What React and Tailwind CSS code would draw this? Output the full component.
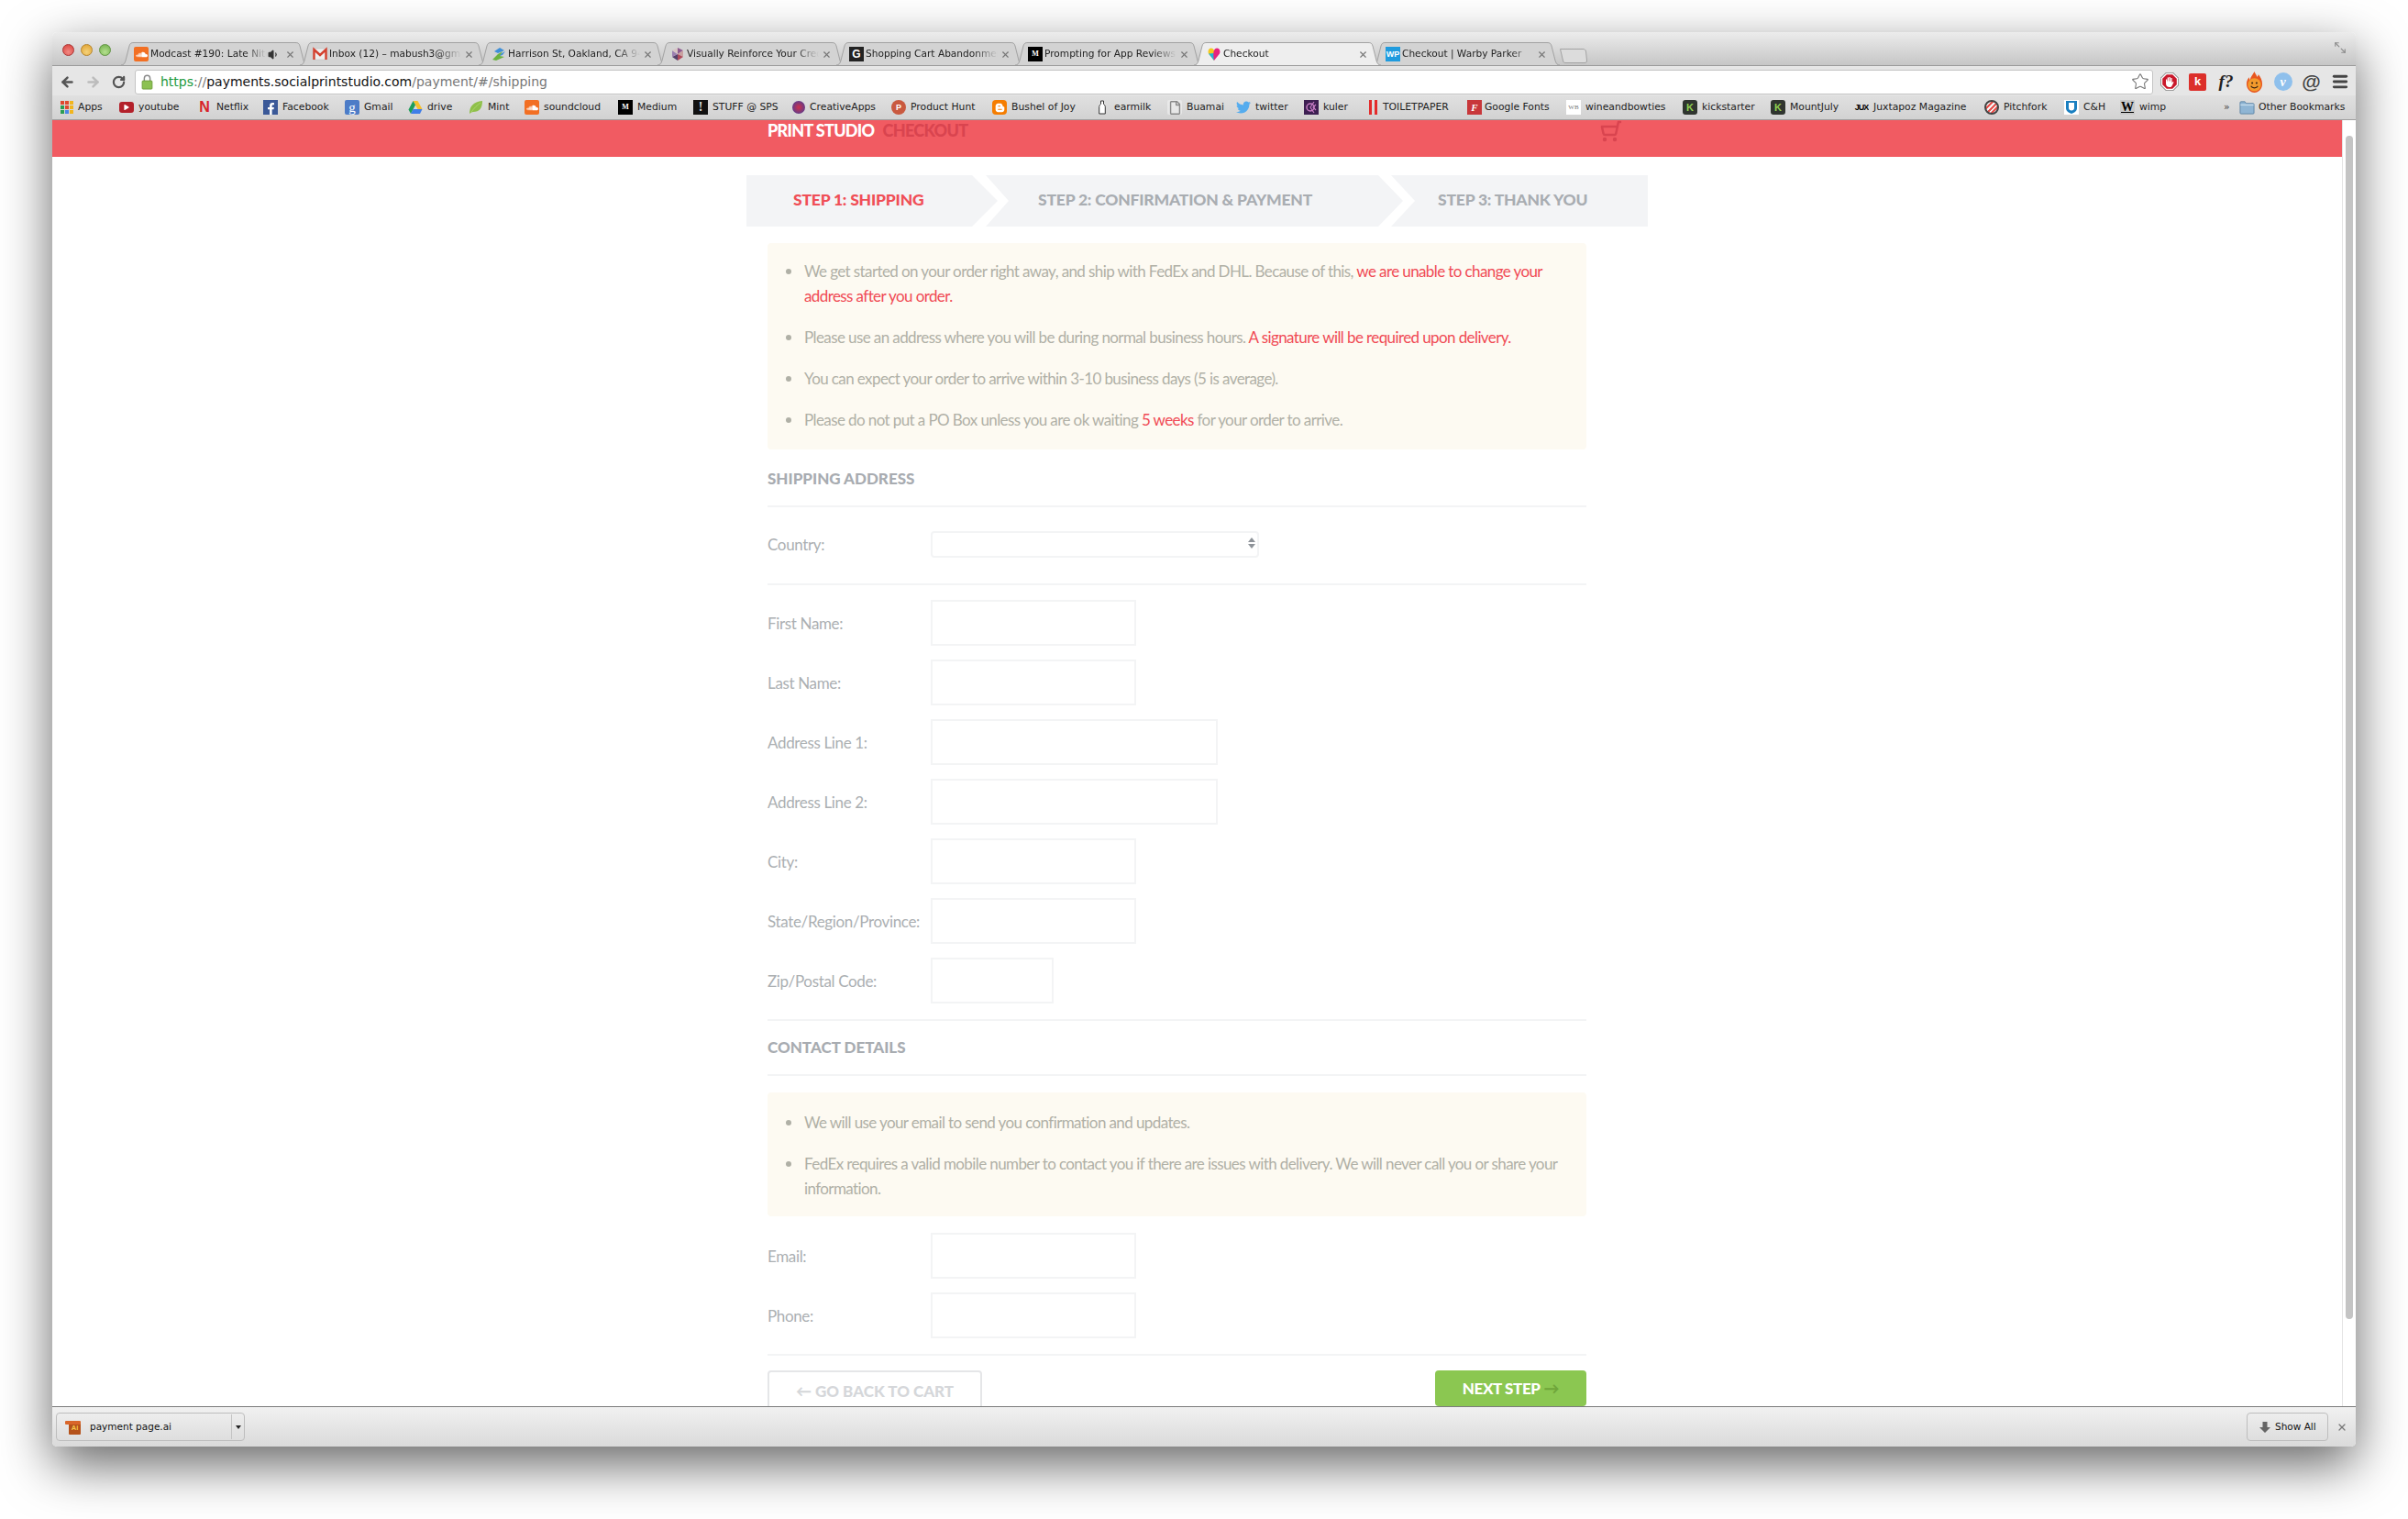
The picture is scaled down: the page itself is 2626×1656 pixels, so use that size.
import React from 'react';
import { ShoppingCart, Star, Menu, ArrowLeft, ArrowRight, RotateCw, X, Volume1, Maximize2 } from 'lucide-react';
import { FaSoundcloud, FaFacebookF, FaTwitter, FaBloggerB, FaPlay, FaRegFile } from 'react-icons/fa';

const Tile = ({ className, children }) => (
  <span className={'flex size-4 shrink-0 items-center justify-center overflow-hidden rounded-[2px] font-bold leading-none ' + className}>{children}</span>
);

const Drive = () => (
  <svg viewBox="0 0 16 16" className="size-4 shrink-0">
    <polygon points="5.5,1 10.500,1 15.500,10 10.500,10" fill="#f6c02c" />
    <polygon points="5.500,1 8,5.500 3,15 0.500,10.500" fill="#1e9e5a" />
    <polygon points="5.500,10 15.500,10 13,15 3,15" fill="#3f7ee8" />
  </svg>
);

const Apps = () => (
  <span className="grid size-[14px] shrink-0 grid-cols-3 gap-[1px]">
    <i className="bg-[#e0492f]" /><i className="bg-[#e0492f]" /><i className="bg-[#f2b51d]" />
    <i className="bg-[#2c9d52]" /><i className="bg-[#e0492f]" /><i className="bg-[#f2b51d]" />
    <i className="bg-[#2c9d52]" /><i className="bg-[#4a86e8]" /><i className="bg-[#f2b51d]" />
  </span>
);

const Bottle = () => (
  <svg viewBox="0 0 16 16" className="size-4 shrink-0" fill="#fff" stroke="#333" strokeWidth="1">
    <path d="M6.500 1h3v3.500c1.200 1 1.800 1.800 1.800 3V15H4.700V7.500c0-1.200.6-2 1.800-3z" />
  </svg>
);

const Gmail = () => (
  <svg viewBox="0 0 16 16" className="size-4 shrink-0">
    <rect x="1" y="2" width="14" height="12" fill="#eee" stroke="#bbb" strokeWidth="0.5" />
    <path d="M1.500 14V3l6.500 6 6.500-6v11" fill="none" stroke="#d4402f" strokeWidth="2.400" />
  </svg>
);

const Zillow = () => (
  <svg viewBox="0 0 16 16" className="size-4 shrink-0">
    <polygon points="9,1 14,4 7,7 3,5" fill="#3f8fd8" />
    <polygon points="15,5 12,9 6,11 11,7" fill="#3f8fd8" />
    <polygon points="12,5 7,8 1,14 5,15 14,11 9,10" fill="#6cb33f" />
  </svg>
);

const Pie = () => (
  <svg viewBox="0 0 16 16" className="size-4 shrink-0">
    <polygon points="8,1 14,4 8,8" fill="#8d5a8f" />
    <polygon points="14,4 14,11 8,8" fill="#c9a0a0" />
    <polygon points="14,11 8,15 8,8" fill="#b04a5a" />
    <polygon points="8,15 2,11 8,8" fill="#55406b" />
    <polygon points="2,11 2,4 8,8" fill="#9b7fb0" />
    <polygon points="2,4 8,1 8,8" fill="#d7c4c4" />
  </svg>
);

const Heart = () => (
  <svg viewBox="0 0 16 16" className="size-4 shrink-0">
    <path d="M8 15 2 7.500C.8 5 2 1.500 4.800 1.500 6.500 1.500 7.500 2.500 8 4z" fill="#f5c91f" />
    <path d="M8 15 2 7.500 8 7z" fill="#1fb5d6" />
    <path d="M8 15 14 7.500C15.200 5 14 1.500 11.200 1.500 9.500 1.500 8.500 2.500 8 4 7 6 7 10 8 15z" fill="#e6237e" />
  </svg>
);

const Leaf = () => (
  <svg viewBox="0 0 16 16" className="size-4 shrink-0">
    <path d="M1 15C1 7 5 2 15 1c0 8-3 12-10 12-1.500 0-2.500.8-4 2z" fill="#8fc04a" />
    <path d="M3 13C6 9 9 6 13 3" stroke="#b6dc7a" strokeWidth=".7" fill="none" />
  </svg>
);

const Padlock = () => (
  <svg viewBox="0 0 14 20" className="h-[18px] w-[13px] shrink-0">
    <path d="M3.500 10V6a3.500 3.500 0 0 1 7 0v4" fill="none" stroke="#8a8a8a" strokeWidth="1.600" />
    <rect x="1" y="9" width="12" height="10" rx="1" fill="#8cc152" stroke="#6d9c3a" />
  </svg>
);

const Kuler = () => (
  <svg viewBox="0 0 16 16" className="size-4 shrink-0">
    <rect width="16" height="16" fill="#3d1f52" />
    <circle cx="7" cy="8" r="4" fill="none" stroke="#c77dc4" strokeWidth="1.500" />
    <path d="M11 2 7 8l4 6M13 5l-3 3 3 3" fill="none" stroke="#c77dc4" strokeWidth="1.200" />
  </svg>
);

const BlueFolder = () => (
  <svg viewBox="0 0 18 16" className="h-4 w-[17px] shrink-0">
    <path d="M1 14.500V2.500C1 1.800 1.500 1.500 2 1.500h4.500L8 3.500h8c.6 0 1 .4 1 1v10c0 .6-.4 1-1 1H2c-.6 0-1-.4-1-1z" fill="#8fb5d4" stroke="#5f86a6" />
    <rect x="1.500" y="4.500" width="15" height="1.500" fill="#c5dcec" />
  </svg>
);

const Flame = () => (
  <svg viewBox="0 0 20 24" className="h-[23px] w-[19px]">
    <path d="M10 0c1 3 2.500 3.500 3 6 1-.8 1.500-2 1.500-3 2.500 3 4.500 6.500 4.500 11 0 5.500-4 10-9 10s-9-4.500-9-10c0-3 1.200-5.500 3-7.500 0 1.200.3 2.200 1 3C5.500 6 8 4 10 0z" fill="#e8561f" />
    <circle cx="10" cy="15" r="7.500" fill="#f39a2c" />
    <circle cx="7.500" cy="13" r="1.100" fill="#3b2412" />
    <circle cx="12.500" cy="13" r="1.100" fill="#3b2412" />
    <path d="M6 16.500c1.500 3 6.500 3 8 0" fill="none" stroke="#3b2412" strokeWidth="1.200" />
  </svg>
);

const StopSign = () => (
  <svg viewBox="0 0 20 20" className="size-5">
    <polygon points="6,0 14,0 20,6 20,14 14,20 6,20 0,14 0,6" fill="#7d7d7d" />
    <polygon points="6.300,.8 13.700,.8 19.200,6.300 19.200,13.700 13.700,19.200 6.300,19.200 .8,13.700 .8,6.300" fill="#fff" />
    <polygon points="6.800,2.200 13.200,2.200 17.800,6.800 17.800,13.200 13.200,17.800 6.800,17.800 2.200,13.200 2.200,6.800" fill="#c9182b" />
    <path d="M6 10V7.500h1.200V9.500h.5V5.500h1.300v4h.5V5h1.300v4.500h.5V6h1.300v5.500l1-1.500 1 .5-2 4c-.5 1-1.300 1.500-2.600 1.500H10c-2.500 0-4-1.500-4-4z" fill="#fff" />
  </svg>
);

const AiIcon = () => (
  <span className="relative flex h-4 w-[17px] items-end justify-end">
    <span className="absolute left-0 top-[1px] h-[4px] w-[17px] rounded-[1px] bg-[#d9662a]" />
    <span className="flex h-[14px] w-[13px] items-center justify-center rounded-[1px] bg-[#b5521a] text-[7.5px] font-bold text-[#f8c94a] [font-family:'Liberation_Sans',sans-serif]">Ai</span>
  </span>
);

const Soundcloud = () => <Tile className="bg-[#f26f23] text-[13px] text-white"><FaSoundcloud /></Tile>;
const MediumIcon = () => <Tile className="rounded-none bg-black text-[8px] text-white [font-family:'Liberation_Serif',serif]">M</Tile>;
const Kick = () => <Tile className="rounded-[3px] bg-[#30352f] text-[11px] text-[#8fd14f] [font-family:'Liberation_Sans',sans-serif]">K</Tile>;

const tabs = [
  { title: 'Modcast #190: Late Nite', icon: <Soundcloud />, sound: true },
  { title: 'Inbox (12) – mabush3@gmail.com', icon: <Gmail /> },
  { title: 'Harrison St, Oakland, CA 94612', icon: <Zillow /> },
  { title: 'Visually Reinforce Your Credibility', icon: <Pie /> },
  { title: 'Shopping Cart Abandonment', icon: <Tile className="rounded-none bg-[#222] text-[12px] text-white [font-family:'Liberation_Sans',sans-serif]">G</Tile> },
  { title: 'Prompting for App Reviews', icon: <MediumIcon /> },
  { title: 'Checkout', icon: <Heart />, active: true },
  { title: 'Checkout | Warby Parker', icon: <Tile className="rounded-none bg-[#1f9bde] text-[9px] text-white [font-family:'Liberation_Sans',sans-serif]">WP</Tile> },
];

const bookmarks = [
  { w: 'w-[64px]', name: 'Apps', icon: <Apps /> },
  { w: 'w-[85px]', name: 'youtube', icon: <span className="flex h-[12px] w-4 shrink-0 items-center justify-center rounded-[3px] bg-[#b3202a] text-[6px] text-white"><FaPlay /></span> },
  { w: 'w-[72px]', name: 'Netflix', icon: <Tile className="text-[16px] text-[#d8232a] [font-family:'Liberation_Sans',sans-serif]">N</Tile> },
  { w: 'w-[89px]', name: 'Facebook', icon: <Tile className="items-end rounded-none bg-[#3b5998] text-[13px] text-white"><FaFacebookF /></Tile> },
  { w: 'w-[69px]', name: 'Gmail', icon: <Tile className="bg-[#4d7cc7] text-[15px] font-normal text-white [font-family:'Liberation_Serif',serif]">g</Tile> },
  { w: 'w-[66px]', name: 'drive', icon: <Drive /> },
  { w: 'w-[61px]', name: 'Mint', icon: <Leaf /> },
  { w: 'w-[102px]', name: 'soundcloud', icon: <Soundcloud /> },
  { w: 'w-[82px]', name: 'Medium', icon: <MediumIcon /> },
  { w: 'w-[108px]', name: 'STUFF @ SPS', icon: <Tile className="rounded-none bg-[#111] text-[14px] text-[#ddd] [font-family:'Liberation_Serif',serif]">!</Tile> },
  { w: 'w-[108px]', name: 'CreativeApps', icon: <span className="size-[14px] shrink-0 rounded-full bg-[radial-gradient(circle,#d0304a,#3a3fa0)]" /> },
  { w: 'w-[110px]', name: 'Product Hunt', icon: <Tile className="rounded-full bg-[#c9593f] text-[9px] text-white [font-family:'Liberation_Sans',sans-serif]">P</Tile> },
  { w: 'w-[112px]', name: 'Bushel of Joy', icon: <Tile className="rounded-[4px] bg-[#f57d00] text-[11px] text-white"><FaBloggerB /></Tile> },
  { w: 'w-[79px]', name: 'earmilk', icon: <Bottle /> },
  { w: 'w-[75px]', name: 'Buamai', icon: <Tile className="bg-[#f2f2f2]/60 text-[15px] text-[#8a8a8a]"><FaRegFile /></Tile> },
  { w: 'w-[74px]', name: 'twitter', icon: <Tile className="text-[16px] text-[#55acee]"><FaTwitter /></Tile> },
  { w: 'w-[69px]', name: 'kuler', icon: <Kuler /> },
  { w: 'w-[109px]', name: 'TOILETPAPER', icon: <span className="flex h-4 w-3 shrink-0 justify-center gap-[3px]"><i className="w-[3px] bg-[#e32b2b]" /><i className="w-[3px] bg-[#e32b2b]" /></span> },
  { w: 'w-[108px]', name: 'Google Fonts', icon: <Tile className="rounded-none bg-[#c8373a] text-[11px] italic text-white [font-family:'Liberation_Serif',serif]">F</Tile>, gap: 'ml-[3px]' },
  { w: 'w-[127px]', name: 'wineandbowties', icon: <Tile className="rounded-none bg-white text-[7px] font-normal text-[#777] [font-family:'Liberation_Serif',serif]">WB</Tile> },
  { w: 'w-[96px]', name: 'kickstarter', icon: <Kick /> },
  { w: 'w-[91px]', name: 'MountJuly', icon: <Kick /> },
  { w: 'w-[142px]', name: 'Juxtapoz Magazine', icon: <Tile className="text-[9px] tracking-[-1px] text-black [font-family:'Liberation_Sans',sans-serif]">JUX</Tile> },
  { w: 'w-[87px]', name: 'Pitchfork', icon: <span className="size-4 shrink-0 rounded-full border-2 border-[#444] bg-[repeating-linear-gradient(135deg,#e8534f_0_2px,#f5f5f5_2px_4px)]" /> },
  { w: 'w-[61px]', name: 'C&H', icon: (
    <svg viewBox="0 0 16 16" className="size-4 shrink-0"><rect width="16" height="16" fill="#fff" /><path d="M2 1h12v8c0 3-3 5-6 6-3-1-6-3-6-6z" fill="#1a7fc0" /><path d="M5 3v6c0 1.500 1.300 2.500 3 2.500s3-1 3-2.500V3z" fill="#fff" /></svg>
  ) },
  { w: 'w-[113px]', name: 'wimp', icon: <Tile className="rounded-none bg-[#c9c9c9] text-[14px] text-black underline [font-family:'Liberation_Serif',serif]">W</Tile> },
];

const extensions = [
  <StopSign key="stop" />,
  <span key="k" className="flex size-[19px] items-center justify-center rounded-[2px] bg-[#dc2f2a] text-[13px] font-bold text-white [font-family:'Liberation_Sans',sans-serif]">k</span>,
  <span key="f" className="text-[19px] font-bold italic text-[#222] [font-family:'Liberation_Serif',serif]">f?</span>,
  <Flame key="fire" />,
  <span key="v" className="flex size-5 items-center justify-center rounded-full bg-[#8fc0ec] text-[14px] font-bold italic text-white [font-family:'Liberation_Serif',serif]">v</span>,
  <span key="at" className="text-[21px] font-bold text-[#444] [font-family:'Liberation_Sans',sans-serif]">@</span>,
  <Menu key="menu" size={20} strokeWidth={3.500} className="text-[#444]" />,
];

const labelClass = 'w-[178px] shrink-0 text-[17px] leading-[27px] text-[#abafb2] tracking-[-0.35px]';

function Field({ label, width, last }) {
  return (
    <div className={'flex h-[50px] items-center ' + (last ? '' : 'mb-[15px]')}>
      <label className={labelClass}>{label}</label>
      <input className={'h-full border-2 border-[#f3f4f5] bg-white ' + width} />
    </div>
  );
}

function SectionHead({ title, className }) {
  return (
    <h2 className={'border-b-2 border-[#f3f4f5] text-[17px] font-black leading-[27px] tracking-[0px] text-[#a8acb1] ' + className}>{title}</h2>
  );
}

function Notes({ items, className }) {
  return (
    <ul className={'rounded-[4px] bg-[#fdfaf2] pl-[40px] pr-[20px] ' + className}>
      {items.map((item, i) => (
        <li key={i} className="relative mb-[18px] text-[17px] leading-[27px] tracking-[-0.6px] text-[#b0b0a6] last:mb-0">
          <span className="absolute -left-[20px] top-[11px] size-[6px] rounded-full bg-[#b0b0a6]" />
          {item}
        </li>
      ))}
    </ul>
  );
}

const Red = ({ children }) => <span className="text-[#f04a55]">{children}</span>;

export default function App() {
  return (
    <div className="h-[1656px] overflow-hidden bg-white pl-[57px] pt-[35px] [font-family:'DejaVu_Sans',sans-serif]">
      <div className="flex h-[1542px] w-[2512px] flex-col overflow-hidden rounded-[5px] bg-white shadow-[0_20px_55px_rgba(0,0,0,0.6)]">
        {/* tab strip */}
        <div className="relative flex h-[36px] shrink-0 items-end bg-gradient-to-b from-[#ececec] to-[#c6c6c6] pl-[75px]">
          <div className="absolute left-[11px] top-[13px] flex gap-[7px]">
            <span className="size-[13px] rounded-full border border-[#a33] bg-[radial-gradient(circle_at_50%_70%,#f28a84,#d8403a)]" />
            <span className="size-[13px] rounded-full border border-[#b5842a] bg-[radial-gradient(circle_at_50%_70%,#f5d27a,#dfa02f)]" />
            <span className="size-[13px] rounded-full border border-[#5f9440] bg-[radial-gradient(circle_at_50%_70%,#b5e08f,#6fae4a)]" />
          </div>
          {tabs.map((tab) => (
            <div key={tab.title} className={'relative -mr-[9px] flex h-[25px] w-[204px] shrink-0 items-center pl-[14px] text-[10.6px] text-[#222] ' + (tab.active ? 'z-10' : '')}>
              <svg viewBox="0 0 204 25" preserveAspectRatio="none" className="absolute inset-0 size-full">
                <path d="M0 25 C3 25 4 23 5 20 L9 4 C10 1 11 .5 14 .5 L190 .5 C193 .5 194 1 195 4 L199 20 C200 23 201 25 204 25" fill={tab.active ? '#eeeeee' : '#d3d3d3'} stroke="#a2a2a2" />
              </svg>
              <span className="relative flex w-full items-center pt-[1px]">
                {tab.icon}
                <span className={'ml-[2px] overflow-hidden whitespace-nowrap [mask-image:linear-gradient(to_right,#000_82%,transparent)] ' + (tab.sound ? 'w-[127px]' : 'w-[144px]')}>{tab.title}</span>
                {tab.sound && <Volume1 size={13} fill="currentColor" className="ml-[1px] text-[#333]" />}
                <X size={11} strokeWidth={2.500} className="absolute left-[165px] text-[#777]" />
              </span>
            </div>
          ))}
          <svg viewBox="0 0 30 16" className="mb-[2px] ml-[9px] h-[16px] w-[30px]">
            <path d="M.5 .5H25C27 .5 28 1 28.500 3L29.500 13C29.500 15 28.500 15.500 27 15.500H6C4.500 15.500 4 15 3.500 13z" fill="#dcdcdc" stroke="#a2a2a2" />
          </svg>
          <Maximize2 size={14} className="absolute right-[10px] top-[10px] scale-x-[-1] text-[#8c8c8c]" />
        </div>

        {/* toolbar */}
        <div className="flex h-[33px] shrink-0 items-center border-t border-[#9b9b9b] bg-[#e6e6e6] pl-[8px] pt-[2px]">
          <ArrowLeft size={17} strokeWidth={3.500} className="text-[#555]" />
          <ArrowRight size={17} strokeWidth={3.500} className="ml-[11px] text-[#bcbcbc]" />
          <RotateCw size={15} strokeWidth={3.500} className="ml-[12px] text-[#555]" />
          <div className="ml-[10px] flex h-[27px] w-[2201px] items-center rounded-[3px] border border-[#c4c4c4] bg-white pl-[6px] text-[14px]">
            <Padlock />
            <span className="ml-[8px] whitespace-nowrap text-[#777]"><span className="text-[#1d9a3e]">https</span>://<span className="text-[#111]">payments.socialprintstudio.com</span>/payment/#/shipping</span>
            <Star size={20} strokeWidth={1.300} className="ml-auto mr-[3px] text-[#777]" />
          </div>
          <div className="ml-[2px] flex">
            {extensions.map((ext, i) => (
              <span key={i} className="flex h-[27px] w-[31px] items-center justify-center">{ext}</span>
            ))}
          </div>
        </div>

        {/* bookmarks */}
        <div className="flex h-[27px] shrink-0 items-center border-b border-[#9e9e9e] bg-gradient-to-b from-[#e0e0e0] to-[#d2d2d2] pl-[9px] text-[10.800px] text-[#222]">
          {bookmarks.map((b) => (
            <span key={b.name} className={'flex shrink-0 items-center whitespace-nowrap ' + b.w}>
              {b.icon}
              <span className={b.gap || 'ml-[5px]'}>{b.name}</span>
            </span>
          ))}
          <span className="w-[17px] shrink-0 text-[#444]">»</span>
          <BlueFolder />
          <span className="ml-[4px] whitespace-nowrap">Other Bookmarks</span>
        </div>

        {/* page */}
        <div className="flex min-h-0 flex-1">
          <main className="min-w-0 flex-1 overflow-hidden [font-family:Lato,sans-serif]">
            <header className="flex h-[40px] justify-center bg-[#f15b62]">
              <div className="flex h-[23px] w-[983px] items-center pl-[23px] text-[18px] font-black tracking-[-0.7px]">
                <span className="text-white">PRINT STUDIO</span>
                <span className="ml-[9px] text-[#d9444f]">CHECKOUT</span>
                <ShoppingCart size={24} strokeWidth={2.500} className="ml-[690px] scale-x-[-1] text-[#d9444f]" />
              </div>
            </header>

            <div className="mx-auto w-[983px] pt-[20px]">
              <div className="flex h-[56px] text-[17.500px] font-black tracking-[-0.2px] text-[#a9adb2]">
                <div className="flex w-[274px] items-center bg-[#f3f4f6] pb-[2px] pl-[51px] text-[#f04f57] [clip-path:polygon(0_0,246px_0,100%_50%,246px_100%,0_100%)]">STEP 1: SHIPPING</div>
                <div className="-ml-[13px] flex w-[455px] items-center bg-[#f3f4f6] pb-[2px] pl-[57px] [clip-path:polygon(0_0,428px_0,100%_50%,428px_100%,0_100%,25px_50%)]">STEP 2: CONFIRMATION &amp; PAYMENT</div>
                <div className="-ml-[13px] flex w-[280px] items-center bg-[#f3f4f6] pb-[2px] pl-[51px] [clip-path:polygon(0_0,100%_0,100%_100%,0_100%,26px_50%)]">STEP 3: THANK YOU</div>
              </div>

              <form className="ml-[23px] w-[893px]">
                <Notes
                  className="mt-[18px] pb-[19px] pt-[17px]"
                  items={[
                    <>We get started on your order right away, and ship with FedEx and DHL. Because of this, <Red>we are unable to change your address after you order.</Red></>,
                    <>Please use an address where you will be during normal business hours. <Red>A signature will be required upon delivery.</Red></>,
                    'You can expect your order to arrive within 3-10 business days (5 is average).',
                    <>Please do not put a PO Box unless you are ok waiting <Red>5 weeks</Red> for your order to arrive.</>,
                  ]}
                />

                <SectionHead title="SHIPPING ADDRESS" className="pb-[16px] pt-[18px]" />

                <div className="mt-[26px] flex items-center border-b-2 border-[#f3f4f5] pb-[28px]">
                  <label className={labelClass}>Country:</label>
                  <div className="relative h-[29px] w-[358px] rounded-[4px] border-2 border-[#f3f4f5] bg-white">
                    <span className="absolute right-[2px] top-[5px] flex flex-col gap-[2px]">
                      <span className="size-0 border-x-[4px] border-b-[5px] border-x-transparent border-b-[#8e9399]" />
                      <span className="size-0 border-x-[4px] border-t-[5px] border-x-transparent border-t-[#8e9399]" />
                    </span>
                  </div>
                </div>

                <div className="mt-[16px]">
                  <Field label="First Name:" width="w-[224px]" />
                  <Field label="Last Name:" width="w-[224px]" />
                  <Field label="Address Line 1:" width="w-[313px]" />
                  <Field label="Address Line 2:" width="w-[313px]" />
                  <Field label="City:" width="w-[224px]" />
                  <Field label="State/Region/Province:" width="w-[224px]" />
                  <Field label="Zip/Postal Code:" width="w-[134px]" last />
                </div>

                <div className="mt-[17px] border-t-2 border-[#f3f4f5]" />
                <SectionHead title="CONTACT DETAILS" className="pb-[16px] pt-[15px]" />

                <Notes
                  className="mt-[18px] pb-[17px] pt-[19px]"
                  items={[
                    'We will use your email to send you confirmation and updates.',
                    'FedEx requires a valid mobile number to contact you if there are issues with delivery. We will never call you or share your information.',
                  ]}
                />

                <div className="mt-[18px] border-b-2 border-[#f3f4f5] pb-[17px]">
                  <Field label="Email:" width="w-[224px]" />
                  <Field label="Phone:" width="w-[224px]" last />
                </div>

                <div className="mt-[16px] flex items-start justify-between text-[17px] font-black">
                  <button type="button" className="flex h-[48px] w-[234px] items-center justify-center rounded-[4px] border-2 border-[#e5e6e8] pb-[3px] text-[#d5d7da]">← GO BACK TO CART</button>
                  <button type="button" className="flex h-[39px] w-[165px] items-center justify-center rounded-[4px] bg-[#8bc751] tracking-[-0.4px] text-white">NEXT STEP <span className="ml-[4px] text-[#6fa53a]">→</span></button>
                </div>
              </form>
            </div>
          </main>
          <aside className="w-[15px] shrink-0 border-l border-[#e4e4e4] bg-white pl-[3px] pt-[17px]">
            <div className="h-[1290px] w-[8px] rounded-full bg-[#c4c4c4]" />
          </aside>
        </div>

        {/* download shelf */}
        <div className="flex h-[44px] shrink-0 items-center border-t border-[#7c7c7c] bg-gradient-to-b from-[#f1f1f1] to-[#dadada] pl-[4px] text-[10.500px] text-[#111]">
          <div className="flex h-[31px] w-[206px] items-center rounded-[4px] border border-[#bdbdbd]">
            <span className="ml-[9px]"><AiIcon /></span>
            <span className="ml-[10px] w-[154px] whitespace-nowrap">payment page.ai</span>
            <span className="flex h-[27px] flex-1 items-center justify-center border-l border-[#c4c4c4]">
              <span className="size-0 border-x-[3px] border-t-[4px] border-x-transparent border-t-[#222]" />
            </span>
          </div>
          <div className="ml-auto flex h-[31px] w-[89px] items-center rounded-[4px] border border-[#bdbdbd] pl-[13px]">
            <svg viewBox="0 0 12 12" className="size-3 text-[#666]"><polygon points="3.500,0 8.500,0 8.500,6 12,6 6,12 0,6 3.500,6" fill="currentColor" /></svg>
            <span className="ml-[5px] whitespace-nowrap">Show All</span>
          </div>
          <X size={12} strokeWidth={2.500} className="ml-[9px] mr-[9px] text-[#777]" />
        </div>
      </div>
    </div>
  );
}
